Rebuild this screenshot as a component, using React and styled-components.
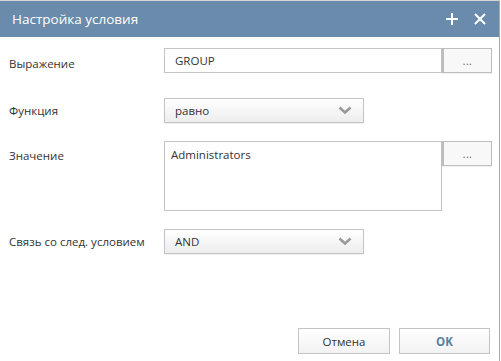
import React from 'react'
import styled, {createGlobalStyle} from 'styled-components'

const GlobalStyle = createGlobalStyle`
  html, body {
    margin: 0;
    padding: 0;
    background: #ffffff;
  }
  body {
    font-family: "Open Sans", "Noto Sans", sans-serif;
    font-size: 11.5px;
    color: #333333;
  }
`

function Chevron() {
    return (
        <svg width="14" height="9" viewBox="0 0 14 9">
            <path d="M1.5 1.5 L7 6.5 L12.5 1.5" fill="none" stroke="#999" strokeWidth="2.6" />
        </svg>
    )
}

function App() {
    return (
        <>
            <GlobalStyle />
            <Window>
                <Header>
                    <Title>Настройка условия</Title>
                    <HeaderTools>
                        <svg width="12" height="12" viewBox="0 0 12 12">
                            <path d="M6 0 V12 M0 6 H12" stroke="#fff" strokeWidth="2" />
                        </svg>
                        <svg width="12" height="12" viewBox="0 0 12 12">
                            <path d="M1 1 L11 11 M11 1 L1 11" stroke="#fff" strokeWidth="2" />
                        </svg>
                    </HeaderTools>
                </Header>

                <Form>
                    <Row $top={11}>
                        <Label $pad={8}>Выражение</Label>
                        <Field>
                            <TextInput $width={278}>GROUP</TextInput>
                            <DotsButton>...</DotsButton>
                        </Field>
                    </Row>

                    <Row $top={25}>
                        <Label $pad={5}>Функция</Label>
                        <Select>
                            <span>равно</span>
                            <Chevron />
                        </Select>
                    </Row>

                    <Row $top={18}>
                        <Label $pad={7}>Значение</Label>
                        <Field>
                            <TextArea>Administrators</TextArea>
                            <DotsButton>...</DotsButton>
                        </Field>
                    </Row>

                    <Row $top={18}>
                        <Label $pad={5}>Связь со след. условием</Label>
                        <Select>
                            <span>AND</span>
                            <Chevron />
                        </Select>
                    </Row>
                </Form>

                <Footer>
                    <Button>Отмена</Button>
                    <Button $primary>OK</Button>
                </Footer>
            </Window>
        </>
    )
}

const Window = styled.div`
  width: 499px;
  height: 360px;
  border-top: 1px solid #d6d6d6;
  border-right: 1px solid #a9a9a9;
  display: flex;
  flex-direction: column;
  background: #fff;
`

const Header = styled.div`
  height: 36px;
  background: #6a8bab;
  display: flex;
  align-items: center;
  justify-content: space-between;
  padding: 0 13px 0 12px;
  flex-shrink: 0;
`

const Title = styled.div`
  color: #fff;
  font-size: 13.5px;
`

const HeaderTools = styled.div`
  display: flex;
  align-items: center;
  gap: 16px;
`

const Form = styled.div`
  flex: 1;
  display: flex;
  flex-direction: column;
`

const Row = styled.div`
  display: flex;
  align-items: flex-start;
  margin-top: ${p => p.$top}px;
`

const Label = styled.div`
  width: 155px;
  padding-left: 9px;
  padding-top: ${p => p.$pad}px;
  line-height: 16px;
  color: #333;
`

const Field = styled.div`
  display: flex;
  align-items: flex-start;
`

const TextInput = styled.div`
  box-sizing: border-box;
  width: ${p => p.$width}px;
  height: 25px;
  border: 1px solid #c4c4c4;
  padding: 0 10px;
  line-height: 23px;
  color: #333;
`

const TextArea = styled.div`
  box-sizing: border-box;
  width: 278px;
  height: 70px;
  border: 1px solid #c4c4c4;
  padding: 4px 6px;
  line-height: 18px;
  color: #333;
`

const DotsButton = styled.div`
  box-sizing: border-box;
  width: 50px;
  height: 25px;
  border: 1px solid #bdbdbd;
  border-left-width: 2px;
  background: #f8f8f8;
  color: #555;
  font-size: 10px;
  display: flex;
  align-items: center;
  justify-content: center;
  letter-spacing: 0.5px;
  box-shadow: 0 1px 1px rgba(0, 0, 0, 0.06);
`

const Select = styled.div`
  box-sizing: border-box;
  width: 200px;
  height: 25px;
  border: 1px solid #c4c4c4;
  background: linear-gradient(#ffffff, #ededed);
  display: flex;
  align-items: center;
  justify-content: space-between;
  padding: 0 11px 0 10px;
  color: #333;
  box-shadow: 0 1px 1px rgba(0, 0, 0, 0.06);
`

const Footer = styled.div`
  display: flex;
  justify-content: flex-end;
  gap: 9px;
  padding: 0 9px 7px 0;
`

const Button = styled.div`
  box-sizing: border-box;
  width: ${p => (p.$primary ? 91 : 92)}px;
  height: 26px;
  border: 1px solid #c4c4c4;
  background: linear-gradient(#ffffff, #f2f2f2);
  display: flex;
  align-items: center;
  justify-content: center;
  color: ${p => (p.$primary ? '#5b7fa6' : '#333')};
  font-weight: ${p => (p.$primary ? 700 : 400)};
`

export default App
